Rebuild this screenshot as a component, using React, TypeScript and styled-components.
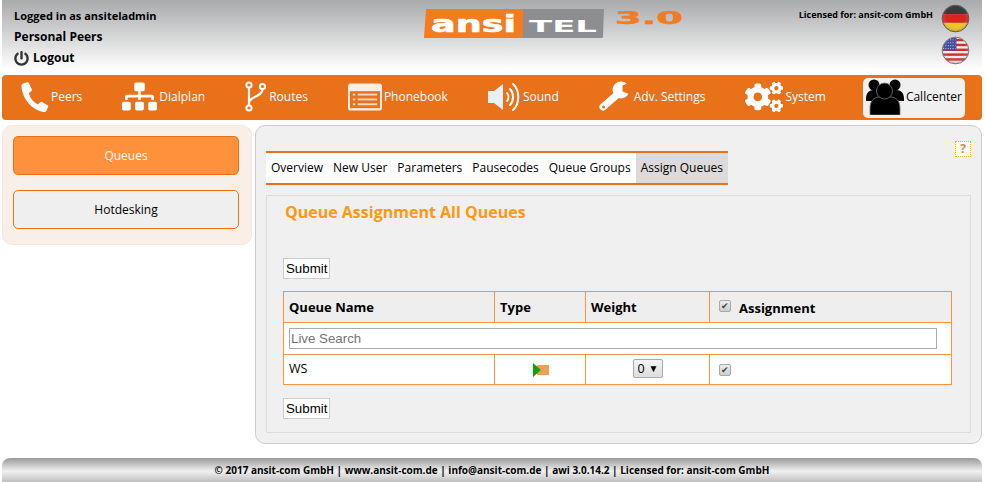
import React from "react";
import styled, { createGlobalStyle } from "styled-components";
import { FaCogs, FaPowerOff, FaSitemap } from "react-icons/fa";

const GlobalStyle = createGlobalStyle`
  html, body {
    margin: 0;
    padding: 0;
    background: #fff;
    font-family: "Open Sans", "Liberation Sans", sans-serif;
    color: #000;
  }
`;

function PhoneIcon() {
  return (
    <svg width="28" height="30" viewBox="0 0 28 30">
      <path
        fill="#fff"
        d="M2.2 1.5 6 .3c.8-.2 1.5.1 1.8.8l3 6.200c.3.7.2 1.300-.4 1.800L7.800 11.200c1.500 5.300 4.700 9 9 11.300l2.600-2.300c.5-.5 1.200-.5 1.800-.2l5.300 3.300c.7.400.9 1.100.6 1.800l-1.500 3.500c-.5 1.100-1.600 1.700-2.800 1.500C10.700 28 1.500 17.300.4 4.200.3 3 1 1.900 2.200 1.500z"
      />
    </svg>
  );
}

function RoutesIcon() {
  return (
    <svg width="22" height="31" viewBox="0 0 22 31" fill="none" stroke="#fff">
      <path strokeWidth="2.200" d="M4 5v21M4 22c0-7 13-5 14-15" />
      <circle cx="4" cy="4" r="2.600" strokeWidth="2" fill="#e8711a" />
      <circle cx="17.500" cy="5.500" r="2.600" strokeWidth="2" fill="#e8711a" />
      <circle cx="4" cy="27" r="2.600" strokeWidth="2" fill="#e8711a" />
    </svg>
  );
}

function PhonebookIcon() {
  return (
    <svg width="34" height="28" viewBox="0 0 35 28">
      <rect width="35" height="28" rx="3" fill="#fbeee4" />
      <rect x="2" y="8" width="31" height="17.500" fill="#e8711a" />
      <g fill="#f6d7bf">
        <rect x="5" y="10.500" width="2.500" height="2" />
        <rect x="5" y="15.500" width="2.500" height="2" />
        <rect x="5" y="20.500" width="2.500" height="2" />
        <rect x="10" y="10.500" width="20" height="2" />
        <rect x="10" y="15.500" width="20" height="2" />
        <rect x="10" y="20.500" width="20" height="2" />
      </g>
    </svg>
  );
}

function SoundIcon() {
  return (
    <svg width="33" height="30" viewBox="0 0 33 30" fill="none">
      <path d="M0 9h6l9-7v26l-9-7H0z" fill="#e9f1f8" />
      <g stroke="#fff" strokeLinecap="round">
        <path strokeWidth="1.800" d="M19 11c2 2 2 6 0 8" />
        <path strokeWidth="2" d="M22 7c4 4 4 12 0 16" />
        <path strokeWidth="2" d="M25 2c7 6 7 20 0 26" />
      </g>
    </svg>
  );
}

function WrenchIcon() {
  return (
    <svg width="33" height="32" viewBox="0 0 33 32">
      <path d="M20 12 4 26" stroke="#fff" strokeWidth="7" strokeLinecap="round" />
      <circle cx="22" cy="9" r="8.500" fill="#fff" />
      <path d="M32 1 23.500 4.500v6L30 13l3-2z" fill="#e8711a" />
      <circle cx="4.500" cy="26" r="1.500" fill="#e8711a" />
    </svg>
  );
}

function CallcenterIcon() {
  return (
    <svg width="38" height="36" viewBox="0 0 38 36">
      <circle cx="8" cy="6" r="5.500" fill="#000" />
      <circle cx="29" cy="6" r="5.500" fill="#000" />
      <path d="M0 20c0-6 3-9 8-9h22c5 0 8 3 8 9v2H0z" fill="#000" />
      <path d="M4 36v-7c0-7 4-11 9-11h12c5 0 9 4 9 11v7z" fill="#000" stroke="#777" strokeWidth="0.800" />
      <circle cx="18.500" cy="12" r="8" fill="#000" stroke="#777" strokeWidth="0.800" />
    </svg>
  );
}

function GermanFlag() {
  return (
    <FlagSvg viewBox="0 0 30 30">
      <defs>
        <clipPath id="deClip">
          <circle cx="15" cy="15" r="13.500" />
        </clipPath>
        <radialGradient id="shine" cx="50%" cy="42%" r="60%">
          <stop offset="55%" stopColor="#fff" stopOpacity="0" />
          <stop offset="100%" stopColor="#000" stopOpacity="0.4" />
        </radialGradient>
      </defs>
      <g clipPath="url(#deClip)">
        <rect width="30" height="10.500" fill="#3a3a3a" />
        <rect y="10.500" width="30" height="9" fill="#d8231f" />
        <rect y="19.500" width="30" height="11" fill="#f0c419" />
        <rect width="30" height="30" fill="url(#shine)" />
      </g>
      <circle cx="15" cy="15" r="13.800" fill="none" stroke="#555" />
    </FlagSvg>
  );
}

function UsFlag() {
  return (
    <FlagSvg viewBox="0 0 30 30">
      <defs>
        <clipPath id="usClip">
          <circle cx="15" cy="15" r="13.500" />
        </clipPath>
      </defs>
      <g clipPath="url(#usClip)">
        <rect width="30" height="30" fill="#f2eeee" />
        {[3, 8, 13, 18, 23, 28].map((y) => (
          <rect key={y} y={y} width="30" height="2.500" fill="#d22c2c" />
        ))}
        <rect width="16" height="15" fill="#3f4f9c" />
        {[4, 7, 10, 13].map((y) => (
          <path key={y} d={`M2 ${y}h13`} stroke="#cdd3ee" strokeWidth="1" strokeDasharray="1 1.500" />
        ))}
        <rect width="30" height="30" fill="url(#shine)" />
      </g>
      <circle cx="15" cy="15" r="13.800" fill="none" stroke="#777" />
    </FlagSvg>
  );
}

function Logo() {
  return (
    <svg width="262" height="32" viewBox="0 0 262 32" fontFamily="'DejaVu Sans', sans-serif" fontWeight="700">
      <path d="M3 1h97v29H1z" fill="#f47b20" />
      <path d="M100 1h81l-1 28-1 1h-79z" fill="#8d8e92" />
      <text x="8" y="24" textLength="85" lengthAdjust="spacingAndGlyphs" fill="#fff" stroke="#fff" strokeWidth="0.600" fontSize="23">
        ansi
      </text>
      <text x="106" y="24" textLength="68" lengthAdjust="spacingAndGlyphs" fill="#fff" fontSize="16.500">
        TEL
      </text>
      <text x="192" y="16" textLength="68" lengthAdjust="spacingAndGlyphs" fill="#f47b20" stroke="#f47b20" strokeWidth="0.500" fontSize="17">
        3.0
      </text>
    </svg>
  );
}

const navItems = [
  { label: "Peers", icon: <PhoneIcon /> },
  { label: "Dialplan", icon: <FaSitemap size={35} /> },
  { label: "Routes", icon: <RoutesIcon /> },
  { label: "Phonebook", icon: <PhonebookIcon /> },
  { label: "Sound", icon: <SoundIcon /> },
  { label: "Adv. Settings", icon: <WrenchIcon /> },
  { label: "System", icon: <FaCogs size={38} /> },
  { label: "Callcenter", icon: <CallcenterIcon />, active: true },
];

const tabs = ["Overview", "New User", "Parameters", "Pausecodes", "Queue Groups", "Assign Queues"];

export default function App() {
  return (
    <Page>
      <GlobalStyle />
      <Header>
        <UserBox>
          <UserLine>Logged in as ansiteladmin</UserLine>
          <UserLine $big>Personal Peers</UserLine>
          <UserLine $big>
            <FaPowerOff size={15} color="#333" />
            Logout
          </UserLine>
        </UserBox>
        <LogoBox>
          <Logo />
        </LogoBox>
        <LicenseBox>
          <LicenseText>Licensed for: ansit-com GmbH</LicenseText>
          <Flags>
            <GermanFlag />
            <UsFlag />
          </Flags>
        </LicenseBox>
      </Header>

      <Nav>
        {navItems.map((item) => (
          <NavItem key={item.label} $active={item.active}>
            {item.icon}
            <span>{item.label}</span>
          </NavItem>
        ))}
      </Nav>

      <Columns>
        <Sidebar>
          <SideButton $active>Queues</SideButton>
          <SideButton>Hotdesking</SideButton>
        </Sidebar>

        <Main>
          <HelpIcon>?</HelpIcon>
          <Tabs>
            {tabs.map((t) => (
              <Tab key={t} $active={t === "Assign Queues"}>
                {t}
              </Tab>
            ))}
          </Tabs>
          <Panel>
            <Title>Queue Assignment All Queues</Title>
            <SubmitButton>Submit</SubmitButton>
            <Table>
              <colgroup>
                <col style={{ width: 211 }} />
                <col style={{ width: 91 }} />
                <col style={{ width: 124 }} />
                <col />
              </colgroup>
              <thead>
                <tr>
                  <Th>Queue Name</Th>
                  <Th>Type</Th>
                  <Th>Weight</Th>
                  <Th>
                    <HeadCheck>
                      <Check type="checkbox" defaultChecked $raised />
                      Assignment
                    </HeadCheck>
                  </Th>
                </tr>
              </thead>
              <tbody>
                <tr>
                  <SearchCell colSpan={4}>
                    <SearchInput placeholder="Live Search" />
                  </SearchCell>
                </tr>
                <tr>
                  <Td>WS</Td>
                  <Td $center>
                    <TypeIcon width="17" height="14" viewBox="0 0 17 14">
                      <rect x="5" y="2" width="12" height="10" fill="#eea05a" />
                      <path d="M1 0l8 7-8 7z" fill="#0aa40a" />
                    </TypeIcon>
                  </Td>
                  <Td $center>
                    <SelectWrap>
                      <WeightSelect defaultValue="0">
                        <option>0</option>
                        <option>1</option>
                      </WeightSelect>
                    </SelectWrap>
                  </Td>
                  <Td>
                    <Check type="checkbox" defaultChecked />
                  </Td>
                </tr>
              </tbody>
            </Table>
            <SubmitButton>Submit</SubmitButton>
          </Panel>
        </Main>
      </Columns>

      <Footer>
        © 2017 ansit-com GmbH | www.ansit-com.de | info@ansit-com.de | awi 3.0.14.2 | Licensed for: ansit-com GmbH
      </Footer>
    </Page>
  );
}

const Page = styled.div`
  width: 980px;
  height: 482px;
  margin-left: 2px;
  overflow: hidden;
  display: flex;
  flex-direction: column;
`;

const Header = styled.header`
  height: 70px;
  display: grid;
  grid-template-columns: 421px 262px 1fr;
  background: linear-gradient(#a9aaac, #fff);
  border-radius: 0 0 8px 8px;
`;

const UserBox = styled.div`
  padding: 7px 0 0 12px;
  display: flex;
  flex-direction: column;
  gap: 3px;
`;

const UserLine = styled.div<{ $big?: boolean }>`
  height: 18px;
  line-height: 18px;
  font-weight: 700;
  font-size: ${(p) => (p.$big ? "12px" : "11px")};
  display: flex;
  align-items: center;
  gap: 4px;
`;

const LogoBox = styled.div`
  padding-top: 8px;
`;

const LicenseBox = styled.div`
  display: flex;
  justify-content: flex-end;
  gap: 8px;
  padding: 4px 12px 0 0;
`;

const LicenseText = styled.div`
  font-size: 9px;
  font-weight: 700;
  line-height: 22px;
`;

const Flags = styled.div`
  display: flex;
  flex-direction: column;
  gap: 3px;
`;

const FlagSvg = styled.svg`
  width: 29px;
  height: 29px;
  display: block;
`;

const Nav = styled.nav`
  margin-top: 5px;
  height: 45px;
  display: flex;
  align-items: center;
  gap: 34px;
  padding-left: 16px;
  background: #e8711a;
  border-radius: 4px;
`;

const NavItem = styled.div<{ $active?: boolean }>`
  box-sizing: border-box;
  height: 40px;
  display: flex;
  align-items: center;
  gap: 2px;
  padding: 0 3px 2px;
  border-radius: 5px;
  font-size: 12px;
  white-space: nowrap;
  color: ${(p) => (p.$active ? "#000" : "#fff")};
  background: ${(p) => (p.$active ? "#f0f0f0" : "transparent")};
`;

const Columns = styled.div`
  margin-top: 5px;
  display: flex;
  align-items: flex-start;
  gap: 3px;
`;

const Sidebar = styled.aside`
  box-sizing: border-box;
  width: 250px;
  height: 120px;
  padding: 10px 12px 10px 10px;
  display: flex;
  flex-direction: column;
  gap: 15px;
  background: #f8efe8;
  border: 1px solid #f9e6d8;
  border-radius: 10px;
`;

const SideButton = styled.div<{ $active?: boolean }>`
  box-sizing: border-box;
  height: 39px;
  line-height: 37px;
  text-align: center;
  font-size: 12px;
  border: 1px solid #e8711a;
  border-radius: 5px;
  color: ${(p) => (p.$active ? "#fff" : "#000")};
  background: ${(p) => (p.$active ? "#ff913d" : "#efefef")};
`;

const Main = styled.main`
  box-sizing: border-box;
  position: relative;
  width: 727px;
  height: 319px;
  padding: 25px 10px 10px 10px;
  background: #f0f0f0;
  border: 1px solid #ccc;
  border-radius: 10px;
`;

const HelpIcon = styled.div`
  position: absolute;
  top: 15px;
  right: 10px;
  box-sizing: border-box;
  width: 16px;
  height: 16px;
  border: 1px dotted #fbb400;
  background: #fffdf0;
  color: #e8843a;
  font-size: 12px;
  font-weight: 700;
  line-height: 14px;
  text-align: center;
`;

const Tabs = styled.div`
  display: inline-flex;
  vertical-align: top;
  border-top: 2px solid #e8711a;
  border-bottom: 2px solid #e8711a;
  background: #fff;
`;

const Tab = styled.div<{ $active?: boolean }>`
  height: 30px;
  line-height: 30px;
  padding: 0 5px;
  font-size: 12px;
  background: ${(p) => (p.$active ? "#dcdada" : "transparent")};
`;

const Panel = styled.section`
  box-sizing: border-box;
  height: 238px;
  margin-top: 10px;
  padding: 0 16px;
  border: 1px solid #ddd;
`;

const Title = styled.h2`
  margin: 0;
  padding: 5px 0 0 2px;
  height: 56px;
  box-sizing: border-box;
  font-size: 16px;
  line-height: 22px;
  font-weight: 700;
  color: #ff9811;
`;

const SubmitButton = styled.button`
  display: block;
  box-sizing: border-box;
  height: 21px;
  padding: 0 2px;
  margin: 6px 0 12px;
  background: #fff;
  border: 1px solid #ccc;
  font-family: "Liberation Sans", Arial, sans-serif;
  font-size: 13.300px;
  color: #000;
`;

const Table = styled.table`
  width: 669px;
  table-layout: fixed;
  border-collapse: collapse;
  background: #fff;
  margin-bottom: 13px;
`;

const Th = styled.th`
  height: 30px;
  padding: 0 5px;
  text-align: left;
  font-size: 13px;
  font-weight: 700;
  background: #eee;
  border: 1px solid #f79447;
`;

const Td = styled.td<{ $center?: boolean }>`
  height: 27px;
  padding: 0 5px 2px;
  font-size: 12.500px;
  text-align: ${(p) => (p.$center ? "center" : "left")};
  border: 1px solid #f79447;
`;

const SearchCell = styled.td`
  height: 31px;
  padding: 0 5px;
  border: 1px solid #f79447;
`;

const SearchInput = styled.input`
  display: block;
  box-sizing: border-box;
  width: 648px;
  height: 21px;
  padding: 1px;
  border: 1px solid #aaa;
  font-family: "Liberation Sans", Arial, sans-serif;
  font-size: 13.300px;
`;

const HeadCheck = styled.span`
  display: flex;
  align-items: center;
  gap: 8px;
  padding-top: 1px;
`;

const Check = styled.input<{ $raised?: boolean }>`
  appearance: none;
  box-sizing: border-box;
  display: inline-block;
  position: relative;
  width: 12px;
  height: 12px;
  margin: 0 0 ${(p) => (p.$raised ? "4px" : "0")} 4px;
  vertical-align: middle;
  border: 1px solid #aaa;
  border-radius: 2px;
  background: linear-gradient(#eee, #ccc);
  &:checked::after {
    content: "✔";
    position: absolute;
    left: 1px;
    top: -1px;
    font-size: 9px;
    line-height: 12px;
    color: #444;
  }
`;

const TypeIcon = styled.svg`
  display: inline-block;
  vertical-align: middle;
`;

const SelectWrap = styled.span`
  position: relative;
  display: inline-block;
  vertical-align: middle;
  &::after {
    content: "▼";
    position: absolute;
    right: 4px;
    top: 2px;
    font-size: 10px;
    pointer-events: none;
  }
`;

const WeightSelect = styled.select`
  appearance: none;
  display: block;
  box-sizing: border-box;
  width: 30px;
  height: 19px;
  padding: 0 0 0 4px;
  border: 1px solid #aaa;
  border-radius: 2px;
  background: linear-gradient(#f4f4f4, #ddd);
  font-family: "Open Sans", sans-serif;
  font-size: 12.500px;
`;

const Footer = styled.footer`
  margin-top: 14px;
  height: 24px;
  line-height: 24px;
  text-align: center;
  font-size: 10px;
  font-weight: 700;
  background: linear-gradient(#9a9a9a, #f0f0f0 55%, #c0c0c0);
  border-radius: 8px 8px 0 0;
`;
